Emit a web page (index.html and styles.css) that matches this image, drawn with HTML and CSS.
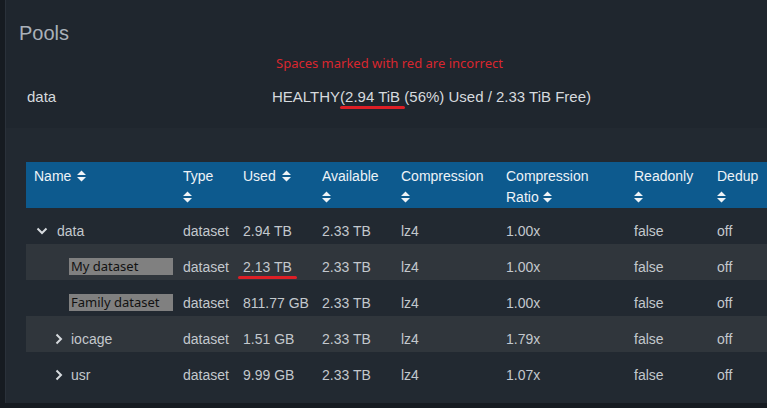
FILE: index.html
```html
<!DOCTYPE html>
<html lang="en">
<head>
  <meta charset="UTF-8" />
  <title>Pools</title>
  <link rel="stylesheet" href="styles.css">
</head>
<body>
  <div class="panel">
    <div class="pool-head">
      <h1>Pools</h1>
      <div class="note">Spaces marked with red are incorrect</div>
      <div class="pool-line">
        <span class="pool-name">data</span>
        <span class="pool-status">HEALTHY(<span class="bad">2.94 TiB</span> (56%) Used / 2.33 TiB Free)</span>
      </div>
    </div>
    <div class="pool-body">
      <table class="datasets">
        <thead>
          <tr>
            <th class="c-name">Name <svg class="sort" viewBox="0 0 10 12"><path d="M5 0L10 5H0z M0 7H10L5 12z"/></svg></th>
            <th class="c-type">Type<br><svg class="sort" viewBox="0 0 10 12"><path d="M5 0L10 5H0z M0 7H10L5 12z"/></svg></th>
            <th class="c-used">Used <svg class="sort" viewBox="0 0 10 12"><path d="M5 0L10 5H0z M0 7H10L5 12z"/></svg></th>
            <th class="c-avail">Available<br><svg class="sort" viewBox="0 0 10 12"><path d="M5 0L10 5H0z M0 7H10L5 12z"/></svg></th>
            <th class="c-comp">Compression<br><svg class="sort" viewBox="0 0 10 12"><path d="M5 0L10 5H0z M0 7H10L5 12z"/></svg></th>
            <th class="c-ratio">Compression<br>Ratio <svg class="sort" viewBox="0 0 10 12"><path d="M5 0L10 5H0z M0 7H10L5 12z"/></svg></th>
            <th class="c-ro">Readonly<br><svg class="sort" viewBox="0 0 10 12"><path d="M5 0L10 5H0z M0 7H10L5 12z"/></svg></th>
            <th class="c-dedup">Dedup<br><svg class="sort" viewBox="0 0 10 12"><path d="M5 0L10 5H0z M0 7H10L5 12z"/></svg></th>
          </tr>
        </thead>
        <tbody>
          <tr>
            <td><div class="name lvl1"><svg class="chev" viewBox="0 0 12 8"><path d="M1.5 1.5L6 6L10.5 1.5"/></svg>data</div></td>
            <td>dataset</td><td>2.94 TB</td><td>2.33 TB</td><td>lz4</td><td>1.00x</td><td>false</td><td>off</td>
          </tr>
          <tr class="alt">
            <td><div class="name lvl2"><span class="tag">My dataset</span></div></td>
            <td>dataset</td><td><span class="bad">2.13 TB</span></td><td>2.33 TB</td><td>lz4</td><td>1.00x</td><td>false</td><td>off</td>
          </tr>
          <tr>
            <td><div class="name lvl2"><span class="tag">Family dataset</span></div></td>
            <td>dataset</td><td>811.77 GB</td><td>2.33 TB</td><td>lz4</td><td>1.00x</td><td>false</td><td>off</td>
          </tr>
          <tr class="alt">
            <td><div class="name lvl2"><svg class="chev right" viewBox="0 0 8 12"><path d="M1.5 1.5L6 6L1.5 10.5"/></svg>iocage</div></td>
            <td>dataset</td><td>1.51 GB</td><td>2.33 TB</td><td>lz4</td><td>1.79x</td><td>false</td><td>off</td>
          </tr>
          <tr>
            <td><div class="name lvl2"><svg class="chev right" viewBox="0 0 8 12"><path d="M1.5 1.5L6 6L1.5 10.5"/></svg>usr</div></td>
            <td>dataset</td><td>9.99 GB</td><td>2.33 TB</td><td>lz4</td><td>1.07x</td><td>false</td><td>off</td>
          </tr>
        </tbody>
      </table>
    </div>
  </div>
</body>
</html>
```

FILE: styles.css
```css
html, body {
  margin: 0;
  padding: 0;
}
* {
  box-sizing: border-box;
}
body {
  background: #161b21;
  font-family: 'Liberation Sans', Arial, sans-serif;
  color: #c5cacf;
  width: 767px;
  height: 408px;
  overflow: hidden;
}
.panel {
  margin-left: 5px;
  padding-top: 2px;
  border-left: 1px solid #2a313a;
  background: #1f262e;
  height: 403px;
  overflow: hidden;
}
.pool-head {
  height: 126px;
  background: #1f262e;
  padding-top: 20px;
}
h1 {
  margin: 0;
  padding-left: 13px;
  font-size: 20px;
  font-weight: normal;
  line-height: 22px;
  color: #aab1b9;
}
.note {
  margin: 11px 0 0 270px;
  font-family: 'Noto Sans', sans-serif;
  font-size: 13px;
  line-height: 16px;
  color: #d9272e;
}
.pool-line {
  display: flex;
  margin-top: 17px;
  font-size: 15px;
  line-height: 18px;
  color: #d6dade;
}
.pool-name {
  width: 266px;
  padding-left: 21px;
}
.bad {
  position: relative;
}
.bad::after {
  content: "";
  position: absolute;
  left: -5px;
  right: -5px;
  bottom: -4px;
  height: 3px;
  border-radius: 2px;
  background: #dd1f26;
}
.pool-body {
  background: #222931;
  padding: 34px 0 0 20px;
  height: 275px;
}
.datasets {
  border-collapse: collapse;
  width: 774px;
  table-layout: fixed;
  font-size: 14px;
}
.datasets th {
  background: #0d5a8e;
  color: #eef3f7;
  font-weight: normal;
  text-align: left;
  vertical-align: top;
  padding: 4px 8px 0;
  line-height: 21px;
  height: 46px;
}
.c-name { width: 149px; }
.c-type { width: 60px; }
.c-used { width: 79px; }
.c-avail { width: 79px; }
.c-comp { width: 105px; }
.c-ratio { width: 128px; }
.c-ro { width: 83px; }
.c-dedup { width: 91px; }
.sort {
  display: inline-block;
  width: 9px;
  height: 12px;
  margin-left: 2px;
  vertical-align: -1px;
  fill: #eef3f7;
}
br + .sort {
  margin-left: 0;
}
.datasets td {
  padding: 15px 8px 5px;
  height: 36px;
  line-height: 16px;
  white-space: nowrap;
  color: #c3c8cd;
}
.datasets tr.alt td {
  background: #30363c;
}
.name {
  display: flex;
  align-items: center;
  height: 16px;
}
.lvl1 { padding-left: 2px; }
.lvl2 { padding-left: 21px; }
.chev {
  flex: none;
  width: 12px;
  height: 8px;
  margin-right: 9px;
  fill: none;
  stroke: #d6dade;
  stroke-width: 2;
}
.chev.right {
  width: 8px;
  height: 12px;
  margin-right: 8px;
}
.tag {
  display: block;
  flex: none;
  width: 104px;
  height: 17px;
  padding-left: 2px;
  margin: -2px 0 0 14px;
  background: #808080;
  color: #121212;
  font-family: 'Noto Sans', sans-serif;
  font-size: 13px;
  line-height: 17px;
}
```
